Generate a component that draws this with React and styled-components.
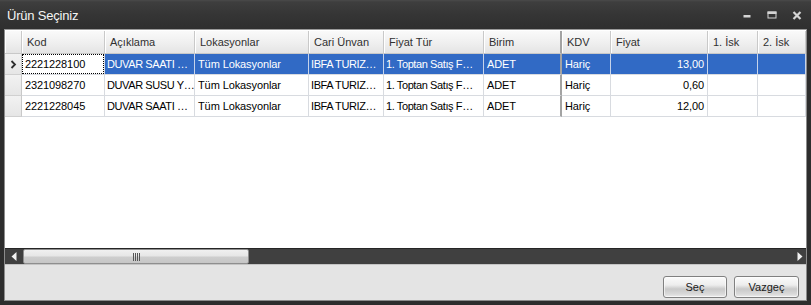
import React from 'react';
import styled, { createGlobalStyle } from 'styled-components';

const GlobalStyle = createGlobalStyle`
  html, body {
    margin: 0;
    padding: 0;
    background: #2b2b2b;
  }
  body {
    font-family: "Liberation Sans", Arial, sans-serif;
  }
`;

const columns = [
  { title: 'Kod', width: 83 },
  { title: 'Açıklama', width: 90 },
  { title: 'Lokasyonlar', width: 114 },
  { title: 'Cari Ünvan', width: 75 },
  { title: 'Fiyat Tür', width: 100 },
  { title: 'Birim', width: 78, split: true },
  { title: 'KDV', width: 49 },
  { title: 'Fiyat', width: 97, right: true },
  { title: '1. İsk', width: 50 },
  { title: '2. İsk', width: 48 },
];

const template = `17px ${columns.map(c => c.width + 'px').join(' ')}`;

const rows = [
  ['2221228100', 'DUVAR SAATI …', 'Tüm Lokasyonlar', 'IBFA TURIZ…', '1. Toptan Satış F…', 'ADET', 'Hariç', '13,00', '', ''],
  ['2321098270', 'DUVAR SUSU Y…', 'Tüm Lokasyonlar', 'IBFA TURIZ…', '1. Toptan Satış F…', 'ADET', 'Hariç', '0,60', '', ''],
  ['2221228045', 'DUVAR SAATI …', 'Tüm Lokasyonlar', 'IBFA TURIZ…', '1. Toptan Satış F…', 'ADET', 'Hariç', '12,00', '', ''],
];

export default function App() {
  return <>
    <GlobalStyle/>
    <Window>
      <TitleBar>
        <Title>Ürün Seçiniz</Title>
        <Controls>
          <Control>
            <svg width="12" height="12" viewBox="0 0 12 12"><rect x="2.5" y="6" width="7" height="2.5" fill="#d4d4d4"/></svg>
          </Control>
          <Control>
            <svg width="12" height="12" viewBox="0 0 12 12">
              <rect x="2" y="3" width="8" height="6" fill="none" stroke="#d4d4d4" strokeWidth="1"/>
              <rect x="1.5" y="2.5" width="9" height="2.5" fill="#d4d4d4"/>
            </svg>
          </Control>
          <Control>
            <svg width="12" height="12" viewBox="0 0 12 12">
              <path d="M2.5 3 L9.5 10 M9.5 3 L2.5 10" stroke="#d4d4d4" strokeWidth="2.2"/>
            </svg>
          </Control>
        </Controls>
      </TitleBar>

      <Content>
        <GridArea>
          <GridRow>
            <HeaderCell/>
            {columns.map(c => <HeaderCell key={c.title} $split={c.split}>{c.title}</HeaderCell>)}
          </GridRow>
          {rows.map((row, i) => (
            <GridRow key={row[0]}>
              <Indicator>
                {i === 0 ? <svg width="7" height="9" viewBox="0 0 7 9"><path d="M1.5 1 L5 4.5 L1.5 8" fill="none" stroke="#2e2e2e" strokeWidth="1.8"/></svg> : null}
              </Indicator>
              {row.map((val, j) => (
                <Cell
                  key={j}
                  $selected={i === 0 && j > 0}
                  $focus={i === 0 && j === 0}
                  $right={columns[j].right}
                  $split={columns[j].split}
                  $tight={val.endsWith('…')}
                >
                  {i === 0 && j === 0 ? <Focus>{val}</Focus> : val}
                </Cell>
              ))}
            </GridRow>
          ))}
        </GridArea>

        <ScrollBar>
          <ArrowBtn $w={17}>
            <svg width="6" height="9" viewBox="0 0 6 9"><path d="M5.5 0 L0.5 4.5 L5.5 9 Z" fill="#f2f2f2"/></svg>
          </ArrowBtn>
          <Thumb>
            <Grip><i/><i/><i/><i/></Grip>
          </Thumb>
          <Track/>
          <ArrowBtn $w={12}>
            <svg width="6" height="9" viewBox="0 0 6 9"><path d="M0.5 0 L5.5 4.5 L0.5 9 Z" fill="#f2f2f2"/></svg>
          </ArrowBtn>
        </ScrollBar>

        <Panel>
          <Button $w={64}>Seç</Button>
          <Button $w={65}>Vazgeç</Button>
        </Panel>
      </Content>
    </Window>
  </>
}

const Window = styled.div`
  width: 811px;
  height: 305px;
  background: #2d2d2d;
  display: flex;
  flex-direction: column;
  box-sizing: border-box;
  overflow: hidden;
`

const TitleBar = styled.div`
  height: 29px;
  flex: none;
  display: flex;
  align-items: center;
  padding-left: 7px;
  background: linear-gradient(#4a4a4a 0px, #3e3e3e 2px, #353535 50%, #2f2f2f 100%);
  box-sizing: border-box;
`

const Title = styled.span`
  color: #f4f4f4;
  font-size: 13px;
  letter-spacing: -0.2px;
  margin-top: 1px;
`

const Controls = styled.div`
  margin-left: auto;
  margin-right: 2px;
  display: flex;
  height: 100%;
`

const Control = styled.div`
  width: 25px;
  display: flex;
  align-items: center;
  justify-content: center;
  margin-top: 1px;
`

const Content = styled.div`
  flex: 1;
  margin: 0 4px 4px 4px;
  border: 1px solid #8c8c8c;
  border-top-color: #9a9a9a;
  display: flex;
  flex-direction: column;
  min-height: 0;
`

const GridArea = styled.div`
  height: 218px;
  flex: none;
  background: #ffffff;
  padding-top: 1px;
  box-sizing: border-box;
  overflow: hidden;
  font-size: 11px;
`

const GridRow = styled.div`
  display: grid;
  grid-template-columns: ${template};
`

const HeaderCell = styled.div`
  height: 23px;
  box-sizing: border-box;
  padding: 0 0 0 5px;
  display: flex;
  align-items: center;
  color: #303030;
  white-space: nowrap;
  overflow: hidden;
  background: linear-gradient(#fafafa, #efefef 55%, #e4e4e4);
  border-bottom: 1px solid #c8c8c8;
  border-right: ${p => p.$split ? '2px solid #a3a3a3' : '1px solid #c9c9c9'};
  box-shadow: inset 1px 0 0 #ffffff;
`

const Indicator = styled.div`
  height: 21px;
  box-sizing: border-box;
  display: flex;
  align-items: center;
  justify-content: center;
  background: linear-gradient(#f2f2f2, #e6e6e6);
  border-right: 1px solid #c9c9c9;
  border-bottom: 1px solid #d0d0d0;
`

const Cell = styled.div`
  height: 21px;
  box-sizing: border-box;
  padding: ${p => p.$focus ? '0' : p.$tight ? '0 0 0 2px' : '0 3px'};
  display: flex;
  align-items: center;
  justify-content: ${p => p.$right ? 'flex-end' : 'flex-start'};
  white-space: nowrap;
  overflow: hidden;
  letter-spacing: ${p => p.$tight ? '-0.4px' : '-0.1px'};
  color: ${p => p.$selected ? '#ffffff' : '#000000'};
  background: ${p => p.$selected ? '#316ac5' : '#ffffff'};
  border-bottom: 1px solid #d8dbe0;
  border-right: ${p => p.$split ? '2px solid #a3a3a3' : p.$selected ? '1px solid #c6d3ea' : '1px solid #d8dbe0'};
`

const Focus = styled.div`
  flex: 1;
  align-self: stretch;
  display: flex;
  align-items: center;
  padding-left: 2px;
  border: 1px dotted #000000;
`

const ScrollBar = styled.div`
  height: 17px;
  flex: none;
  display: flex;
  background: #404040;
  border-top: 1px solid #262626;
  border-bottom: 1px solid #c4c4c4;
  box-sizing: border-box;
`

const ArrowBtn = styled.div`
  width: ${p => p.$w}px;
  flex: none;
  display: flex;
  align-items: center;
  justify-content: center;
`

const Thumb = styled.div`
  width: 226px;
  margin-left: 1px;
  flex: none;
  display: flex;
  align-items: center;
  justify-content: center;
  box-sizing: border-box;
  border: 1px solid #8e8e8e;
  border-radius: 2px;
  background: linear-gradient(#f0f0f0, #e6e6e6 45%, #cdcdcd 55%, #c6c6c6);
`

const Grip = styled.div`
  display: flex;
  gap: 1px;
  height: 8px;
  & > i {
    width: 1px;
    background: #555555;
  }
`

const Track = styled.div`
  flex: 1;
`

const Panel = styled.div`
  flex: 1;
  background: #e4e4e4;
  display: flex;
  justify-content: flex-end;
  align-items: flex-start;
  gap: 7px;
  padding: 11px 7px 0 0;
  box-sizing: border-box;
`

const Button = styled.div`
  width: ${p => p.$w}px;
  height: 22px;
  box-sizing: border-box;
  display: flex;
  align-items: center;
  justify-content: center;
  font-size: 11px;
  color: #1a1a1a;
  border: 1px solid #808080;
  border-radius: 3px;
  background: linear-gradient(#fbfbfb, #ededed 40%, #c9c9c9 60%, #d9d9d9 85%, #ececec);
  box-shadow: inset 0 0 0 1px rgba(255, 255, 255, 0.6);
`
